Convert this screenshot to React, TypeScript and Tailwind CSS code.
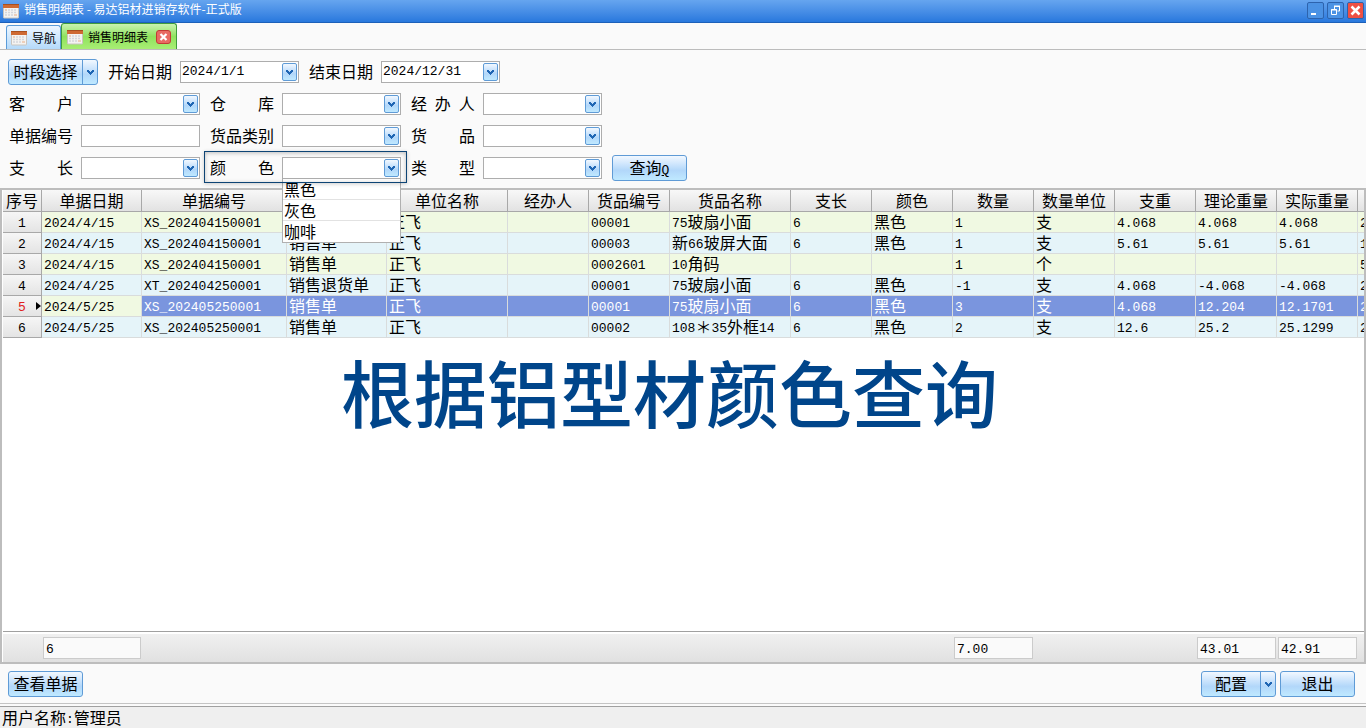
import React, { useState } from "react";
import clsx from "clsx";

const columns = [
  "单据日期", "单据编号", "单据类型", "单位名称", "经办人", "货品编号", "货品名称", "支长",
  "颜色", "数量", "数量单位", "支重", "理论重量", "实际重量", "",
];

const columnWidths = [
  "w-[39px]", "w-[100px]", "w-[145px]", "w-[100px]", "w-[121px]", "w-[81px]", "w-[81px]", "w-[121px]",
  "w-[81px]", "w-[81px]", "w-[81px]", "w-[81px]", "w-[81px]", "w-[81px]", "w-[81px]", "w-[81px]",
];

const rows = [
  ["2024/4/15", "XS_202404150001", "销售单", "正飞", "", "00001", "75玻扇小面", "6", "黑色", "1", "支", "4.068", "4.068", "4.068", "2"],
  ["2024/4/15", "XS_202404150001", "销售单", "正飞", "", "00003", "新66玻屏大面", "6", "黑色", "1", "支", "5.61", "5.61", "5.61", "1"],
  ["2024/4/15", "XS_202404150001", "销售单", "正飞", "", "0002601", "10角码", "", "", "1", "个", "", "", "", "5"],
  ["2024/4/25", "XT_202404250001", "销售退货单", "正飞", "", "00001", "75玻扇小面", "6", "黑色", "-1", "支", "4.068", "-4.068", "-4.068", "2"],
  ["2024/5/25", "XS_202405250001", "销售单", "正飞", "", "00001", "75玻扇小面", "6", "黑色", "3", "支", "4.068", "12.204", "12.1701", "2"],
  ["2024/5/25", "XS_202405250001", "销售单", "正飞", "", "00002", "108＊35外框14", "6", "黑色", "2", "支", "12.6", "25.2", "25.1299", "2"],
];

const colorOptions = ["黑色", "灰色", "咖啡"];

const glossy =
  "border border-[#5f9bd6] bg-linear-to-b from-[#f2f8ff] via-[#b2d7fa] via-60% to-[#bfe9ff] hover:brightness-105";

// Latin runs use the half-width face so they line up with the Chinese text
function Mixed({ text }: { text: string }) {
  return (
    <>
      {text.split(/([\x20-\x7e]+)/).filter(Boolean).map((part, i) =>
        /^[\x20-\x7e]/.test(part) ? (
          <span key={i} className="align-[1px] font-['Liberation_Mono',monospace] text-[13px] leading-none whitespace-pre">{part}</span>
        ) : (
          part
        )
      )}
    </>
  );
}

function SheetIcon() {
  return (
    <svg width="16" height="16" viewBox="0 0 16 16" className="shrink-0" aria-hidden="true">
      <rect x="0.5" y="1.5" width="15" height="13.5" rx="0.5" fill="#f4f3f1" stroke="#c9c4be" />
      <rect x="0" y="1" width="16" height="4" fill="#cf6a33" />
      <rect x="0" y="1" width="16" height="1" fill="#a9501f" />
      <path d="M5 7h9M2 9.5h12M2 12h9" stroke="#d3d6dc" strokeWidth="1.5" strokeDasharray="2 1" />
      <path d="M2 7h2M11 12h3" stroke="#ecc3a8" strokeWidth="1.5" />
    </svg>
  );
}

function Chevron() {
  return (
    <svg width="7" height="5" viewBox="0 0 7 5" aria-hidden="true" shapeRendering="crispEdges">
      <path d="M0 0h2v1h1v1h1v-1h1v-1h2v2h-1v1h-1v1h-1v1h-1v-1h-1v-1h-1v-1h-1z" fill="#1f66b4" />
    </svg>
  );
}

function Label({ id, text }: { id: string; text: string }) {
  return (
    <label htmlFor={id} className="w-16 shrink-0 pb-0.5 whitespace-nowrap">
      <Mixed text={text} />
    </label>
  );
}

function ComboField({ id, label, options = [] }: { id: string; label: string; options?: string[] }) {
  return (
    <div className="flex items-center gap-2">
      <Label id={id} text={label} />
      <div className="relative w-[119px]">
        <select id={id} className="block h-[22px] w-full appearance-none border border-[#adadad] bg-white px-0.5 outline-none">
          <option value=""></option>
          {options.map((o) => <option key={o}>{o}</option>)}
        </select>
        <span className={clsx("pointer-events-none absolute top-0.5 right-0.5 flex h-[18px] w-[15px] items-center justify-center rounded-xs", glossy)}>
          <Chevron />
        </span>
      </div>
    </div>
  );
}

function DateField({ id, label, value }: { id: string; label: string; value: string }) {
  return (
    <div className="flex items-center gap-2">
      <Label id={id} text={label} />
      <div className="flex h-[22px] w-[119px] items-center border border-[#adadad] bg-white pr-px">
        <input
          id={id}
          type="text"
          defaultValue={value}
          className="h-5 w-full min-w-0 flex-1 px-px font-['Liberation_Mono',monospace] text-[13px] outline-none"
        />
        <button type="button" aria-label={label} className={clsx("flex h-[18px] w-[15px] items-center justify-center rounded-xs", glossy)}>
          <Chevron />
        </button>
      </div>
    </div>
  );
}

function SplitButton({ text, id, wide }: { text: string; id: string; wide: string }) {
  return (
    <div className={clsx("flex h-[26px] rounded-[3px] leading-5", glossy, wide)}>
      <button type="button" className="flex-1 pb-0.5 whitespace-nowrap">{text}</button>
      <button type="button" aria-label={id} className="flex w-[15px] items-center justify-center border-l border-[#5f9bd6]">
        <Chevron />
      </button>
    </div>
  );
}

function PushButton({ type = "button", children }: { type?: "button" | "submit"; children: React.ReactNode }) {
  return (
    <button type={type} className={clsx("h-[26px] w-[75px] rounded-[3px] pb-0.5 leading-5 whitespace-nowrap", glossy)}>
      {children}
    </button>
  );
}

function TitleBar() {
  const box = "flex h-[17px] w-[17px] items-center justify-center rounded-xs border border-[#2d63ad]";
  return (
    <header className="flex h-[23px] items-center border-b border-[#1c60b9] bg-linear-to-b from-[#66a5ef] to-[#2878dd] pr-0.5 pl-[3px]">
      <SheetIcon />
      <h1 className="ml-[5px] flex-1 truncate pb-1 text-xs leading-4 text-white">销售明细表 - 易达铝材进销存软件-正式版</h1>
      <div className="flex gap-[3px] pb-0.5">
        <button type="button" aria-label="最小化" className={clsx(box, "bg-[#4b92e4]")}>
          <svg width="11" height="11" aria-hidden="true"><path d="M1 8h5v2h-5z" fill="#fff" /></svg>
        </button>
        <button type="button" aria-label="还原" className={clsx(box, "bg-[#4b92e4]")}>
          <svg width="11" height="11" viewBox="0 0 11 11" fill="none" stroke="#fff" aria-hidden="true">
            <path d="M4.500 4V1.500h5v4.500h-2M4 1.500h6M1.500 4.500h5v5h-5zM1 5h6M4 1h6" />
          </svg>
        </button>
        <button type="button" aria-label="关闭" className={clsx(box, "bg-[#ee5044]")}>
          <svg width="11" height="11" viewBox="0 0 11 11" aria-hidden="true">
            <path d="M1.500 1.500l8 8M9.500 1.500l-8 8" stroke="#fff" strokeWidth="2.500" />
          </svg>
        </button>
      </div>
    </header>
  );
}

function Tabs() {
  return (
    <nav className="flex h-[27px] items-end border-b border-[#bcbcbc] bg-[#fafafa] pl-1.5 text-xs">
      <button type="button" className="flex h-6 w-[55px] items-center gap-[5px] rounded-t-[3px] border border-b-0 border-[#5b9bd8] bg-linear-to-b from-[#edf6ff] to-[#b4dafa] pl-1">
        <SheetIcon />
        <span className="whitespace-nowrap">导航</span>
      </button>
      <div className="flex h-[26px] w-[116px] items-center rounded-t-[3px] border border-b-0 border-[#3f9c3c] bg-linear-to-b from-[#c9f3b0] via-[#8fe25c] via-50% to-[#a8ee74] pl-[5px]">
        <button type="button" className="flex items-center gap-[5px]">
          <SheetIcon />
          <span className="whitespace-nowrap">销售明细表</span>
        </button>
        <button type="button" aria-label="关闭标签" className="ml-2 flex h-[14px] w-[15px] items-center justify-center rounded-[3px] border border-[#c33a34] bg-[#e86a62]">
          <svg width="9" height="8" viewBox="0 0 9 8" aria-hidden="true">
            <path d="M1.500 1l6 6M7.500 1l-6 6" stroke="#fff" strokeWidth="2.200" />
          </svg>
        </button>
      </div>
    </nav>
  );
}

function Filters() {
  return (
    <form className="bg-[#fafafa] pt-1.5 pb-1" onSubmit={(e) => e.preventDefault()}>
      <div className="flex h-8 items-center gap-[10px] pl-2">
        <SplitButton text="时段选择" id="选择时段" wide="w-[90px]" />
        <DateField id="start" label="开始日期" value="2024/1/1" />
        <DateField id="end" label="结束日期" value="2024/12/31" />
      </div>
      <div className="flex h-8 items-center gap-[10px] pl-[9px]">
        <ComboField id="customer" label="客　　户" />
        <ComboField id="warehouse" label="仓　　库" />
        <ComboField id="handler" label="经 办 人" />
      </div>
      <div className="flex h-8 items-center gap-[10px] pl-[9px]">
        <div className="flex items-center gap-2">
          <Label id="orderNo" text="单据编号" />
          <input id="orderNo" type="text" className="h-[22px] w-[119px] border border-[#adadad] bg-white px-0.5 outline-none" />
        </div>
        <ComboField id="category" label="货品类别" />
        <ComboField id="goods" label="货　　品" />
      </div>
      <div className="flex h-8 items-center gap-[10px] pl-[9px]">
        <ComboField id="length" label="支　　长" />
        <div className="relative">
          <ComboField id="color" label="颜　　色" options={colorOptions} />
          <ul className="absolute top-full right-0 z-10 w-[119px] border border-t-0 border-[#b0b0b0] bg-white">
            {colorOptions.map((c) => (
              <li key={c} className="h-[21px] border-b border-[#e2e2e2] pl-px leading-5 last:border-b-0">{c}</li>
            ))}
          </ul>
          {/* focus frame around the active filter */}
          <div className="pointer-events-none absolute -inset-x-[6px] -top-[6px] -bottom-[4px] z-20 border border-[#0d4475] shadow-[inset_0_1px_4px_rgba(0,0,0,0.25),0_1px_4px_rgba(0,0,0,0.2)]" />
        </div>
        <ComboField id="type" label="类　　型" />
        <PushButton type="submit">
          查询<span className="font-['Liberation_Mono',monospace] text-[13px] leading-none underline">Q</span>
        </PushButton>
      </div>
    </form>
  );
}

function SalesTable() {
  const [current, setCurrent] = useState(4);
  const headCell = "h-[22px] border-r border-b border-[#a8a8a8] bg-linear-to-b from-[#f8f8f8] to-[#e2e2e2] p-0 pb-0.5 font-normal leading-[18px] whitespace-nowrap";

  return (
    <table className="w-[1400px] table-fixed border-separate border-spacing-0">
      <colgroup>
        {columnWidths.map((w, i) => <col key={i} className={w} />)}
      </colgroup>
      <thead>
        <tr>
          <th className={headCell}>序号</th>
          {columns.map((c, i) => <th key={i} className={headCell}>{c}</th>)}
        </tr>
      </thead>
      <tbody>
        {rows.map((row, r) => (
          <tr key={r} onClick={() => setCurrent(r)} className={r % 2 === 0 ? "bg-[#f0f9e2]" : "bg-[#e5f4f9]"}>
            <th
              scope="row"
              className={clsx(
                "relative h-[21px] border-r border-b border-[#a8a8a8] bg-linear-to-b from-[#f6f6f6] to-[#e4e4e4] p-0 pb-0.5 font-normal leading-[18px]",
                r === current && "text-[#e02020]"
              )}
            >
              <Mixed text={String(r + 1)} />
              {r === current && (
                <svg width="5" height="8" className="absolute top-1.5 right-0" aria-hidden="true">
                  <path d="M0 0l5 4-5 4z" fill="#000" />
                </svg>
              )}
            </th>
            {row.map((cell, i) => (
              <td
                key={i}
                className={clsx(
                  "h-[21px] border-r border-b border-[#d9dcdc] p-0 pb-0.5 pl-0.5 leading-[18px] whitespace-nowrap",
                  r === current && i > 0 && "bg-[#7a95de] text-white"
                )}
              >
                <Mixed text={cell} />
              </td>
            ))}
          </tr>
        ))}
      </tbody>
    </table>
  );
}

function Totals() {
  const box = "mx-px h-[22px] border border-[#cbcbcb] bg-[#fafafa] pl-0.5 leading-[18px]";
  return (
    <div className="border-t border-[#a0a0a0] bg-white pt-0.5">
      <div className="grid h-7 grid-cols-[39px_100px_145px_100px_121px_81px_81px_121px_81px_81px_81px_81px_81px_81px_81px] items-center overflow-hidden bg-linear-to-b from-[#f0f0f0] to-[#e1e1e1]">
        <div className={clsx(box, "col-start-2")}><Mixed text="6" /></div>
        <div className={clsx(box, "col-start-11")}><Mixed text="7.00" /></div>
        <div className={clsx(box, "col-start-14")}><Mixed text="43.01" /></div>
        <div className={clsx(box, "col-start-15")}><Mixed text="42.91" /></div>
      </div>
    </div>
  );
}

export default function App() {
  return (
    <div className="flex min-h-screen flex-col overflow-hidden bg-[#fafafa] font-['Noto_Sans_CJK_SC',sans-serif] text-base leading-5 text-black">
      <TitleBar />
      <Tabs />
      <Filters />
      <main className="flex flex-1 flex-col overflow-hidden border-2 border-[#bdbdbd] bg-white pl-px">
        <SalesTable />
        <p className="flex-1 pt-2 pr-7 text-center text-[73px] leading-[88px] font-medium text-[#00458a]">根据铝型材颜色查询</p>
        <Totals />
      </main>
      <div className="flex gap-1 border-b border-[#c4c4c4] pt-[7px] pr-[11px] pb-[6px] pl-2">
        <PushButton>查看单据</PushButton>
        <div className="flex-1" />
        <SplitButton text="配置" id="更多配置" wide="w-[75px]" />
        <PushButton>退出</PushButton>
      </div>
      <footer className="mt-0.5 h-[22px] border-t border-[#a0a0a0] bg-[#efefef] pl-0.5 leading-5">
        <Mixed text="用户名称:管理员" />
      </footer>
    </div>
  );
}
